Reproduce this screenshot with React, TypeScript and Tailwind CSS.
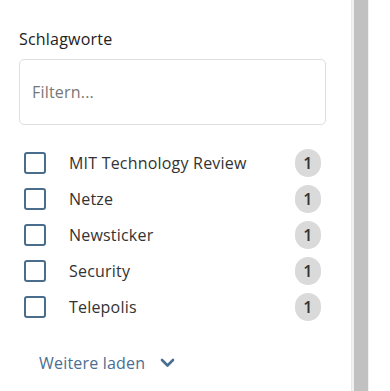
import React from "react";

const items = ["MIT Technology Review", "Netze", "Newsticker", "Security", "Telepolis"];

export default function App() {
  return (
    <div
      className="flex w-[390px] h-[391px] bg-white overflow-hidden tracking-[0.2px]"
      style={{ fontFamily: '"Open Sans", "Noto Sans", sans-serif' }}
    >
      <div className="w-[351px] pl-[19px] pr-[25px] pt-[27px]">
        <h2 className="text-[16px] leading-[24px] text-[#222]">Schlagworte</h2>
        <div className="mt-[8px] h-[66px] w-[307px] rounded-[5px] border border-[#dedede] flex items-center px-[12px]">
          <span className="text-[16px] text-[#777]">Filtern...</span>
        </div>
        <ul className="mt-[20px] flex flex-col">
          {items.map((t) => (
            <li key={t} className="h-[36px] flex items-center pl-[5px] pr-[5px]">
              <span className="w-[22px] h-[22px] rounded-[3px] border-2 border-[#4a6d8c] shrink-0" />
              <span className="ml-[23px] flex-1 text-[16px] text-[#333]">{t}</span>
              <span className="w-[26px] h-[28px] rounded-full bg-[#dadada] flex items-center justify-center text-[16px] font-semibold text-[#333]">
                1
              </span>
            </li>
          ))}
        </ul>
        <div className="mt-[26px] ml-[20px] flex items-center h-[24px] text-[16px] text-[#4a6e91]">
          <span>Weitere laden</span>
          <svg className="ml-[15px]" width="15" height="10" viewBox="0 0 15 10" fill="none">
            <path d="M2 2l5.5 5.5L13 2" stroke="#4a6e91" strokeWidth="2.6" strokeLinecap="round" strokeLinejoin="round" />
          </svg>
        </div>
      </div>
      <div className="w-[18px] h-full bg-[#f1f1f1] border-l border-[#e8e8e8] flex justify-center">
        <div className="w-[14px] h-full bg-[#c1c1c1]" />
      </div>
      <div className="flex-1 bg-white" />
    </div>
  );
}
